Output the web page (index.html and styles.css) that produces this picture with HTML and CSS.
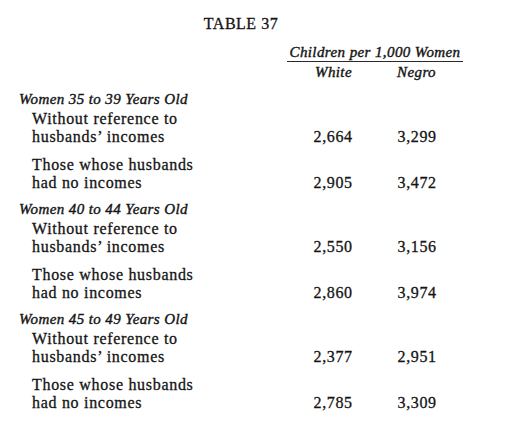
FILE: index.html
```html
<!DOCTYPE html>
<html lang="en">
<head>
<meta charset="utf-8">
<title>Table 37</title>
<link rel="stylesheet" href="styles.css">
</head>
<body>
<main class="page">
  <h1 class="title">TABLE 37</h1>
  <div class="row">
    <div class="spanner">Children per 1,000 Women</div>
  </div>
  <div class="row cols">
    <div class="col-head c1">White</div>
    <div class="col-head c2">Negro</div>
  </div>

  <section class="group">
    <div class="group-title">Women 35 to 39 Years Old</div>
    <div class="row entry">
      <div class="label">Without reference to<br>husbands’ incomes</div>
      <div class="num c1">2,664</div>
      <div class="num c2">3,299</div>
    </div>
    <div class="row entry">
      <div class="label">Those whose husbands<br>had no incomes</div>
      <div class="num c1">2,905</div>
      <div class="num c2">3,472</div>
    </div>
  </section>

  <section class="group">
    <div class="group-title">Women 40 to 44 Years Old</div>
    <div class="row entry">
      <div class="label">Without reference to<br>husbands’ incomes</div>
      <div class="num c1">2,550</div>
      <div class="num c2">3,156</div>
    </div>
    <div class="row entry">
      <div class="label">Those whose husbands<br>had no incomes</div>
      <div class="num c1">2,860</div>
      <div class="num c2">3,974</div>
    </div>
  </section>

  <section class="group">
    <div class="group-title">Women 45 to 49 Years Old</div>
    <div class="row entry">
      <div class="label">Without reference to<br>husbands’ incomes</div>
      <div class="num c1">2,377</div>
      <div class="num c2">2,951</div>
    </div>
    <div class="row entry">
      <div class="label">Those whose husbands<br>had no incomes</div>
      <div class="num c1">2,785</div>
      <div class="num c2">3,309</div>
    </div>
  </section>
</main>
</body>
</html>
```
FILE: styles.css
```css
html, body {
  margin: 0;
  background: #ffffff;
}

body {
  color: #141414;
  font-family: "Liberation Serif", "Times New Roman", serif;
  -webkit-text-stroke: 0.3px #141414;
}

.page {
  width: 444px;
  padding: 15px 0 0 19px;
}

.title {
  margin: 0 0 10px;
  font-size: 16px;
  line-height: 18px;
  font-weight: normal;
  letter-spacing: 0.5px;
  text-align: center;
}

.row {
  display: grid;
  grid-template-columns: 268px 65px 84px 27px;
}

.spanner {
  grid-column: 2 / 5;
  font-style: italic;
  font-size: 15px;
  line-height: 18px;
  letter-spacing: 0.4px;
  text-align: center;
  border-bottom: 1px solid #2a2a2a;
  -webkit-text-stroke: 0.4px #141414;
}

.cols {
  margin: 1px 0 9px;
}

.col-head {
  font-style: italic;
  font-size: 15px;
  line-height: 18px;
  letter-spacing: 0.4px;
  text-align: right;
  -webkit-text-stroke: 0.4px #141414;
}

.c1 {
  grid-column: 2;
}

.c2 {
  grid-column: 3;
}

.group-title {
  margin-bottom: 2px;
  font-style: italic;
  font-size: 15px;
  line-height: 18px;
  letter-spacing: 0.4px;
  -webkit-text-stroke: 0.4px #141414;
}

.entry {
  margin-bottom: 10px;
}

.entry:last-child {
  margin-bottom: 8px;
}

.label {
  grid-column: 1;
  padding-left: 13px;
  font-size: 16px;
  line-height: 18px;
  letter-spacing: 0.7px;
}

.num {
  align-self: end;
  margin-right: -0.6px;
  font-size: 16px;
  line-height: 18px;
  letter-spacing: 0.6px;
  text-align: right;
}
```
